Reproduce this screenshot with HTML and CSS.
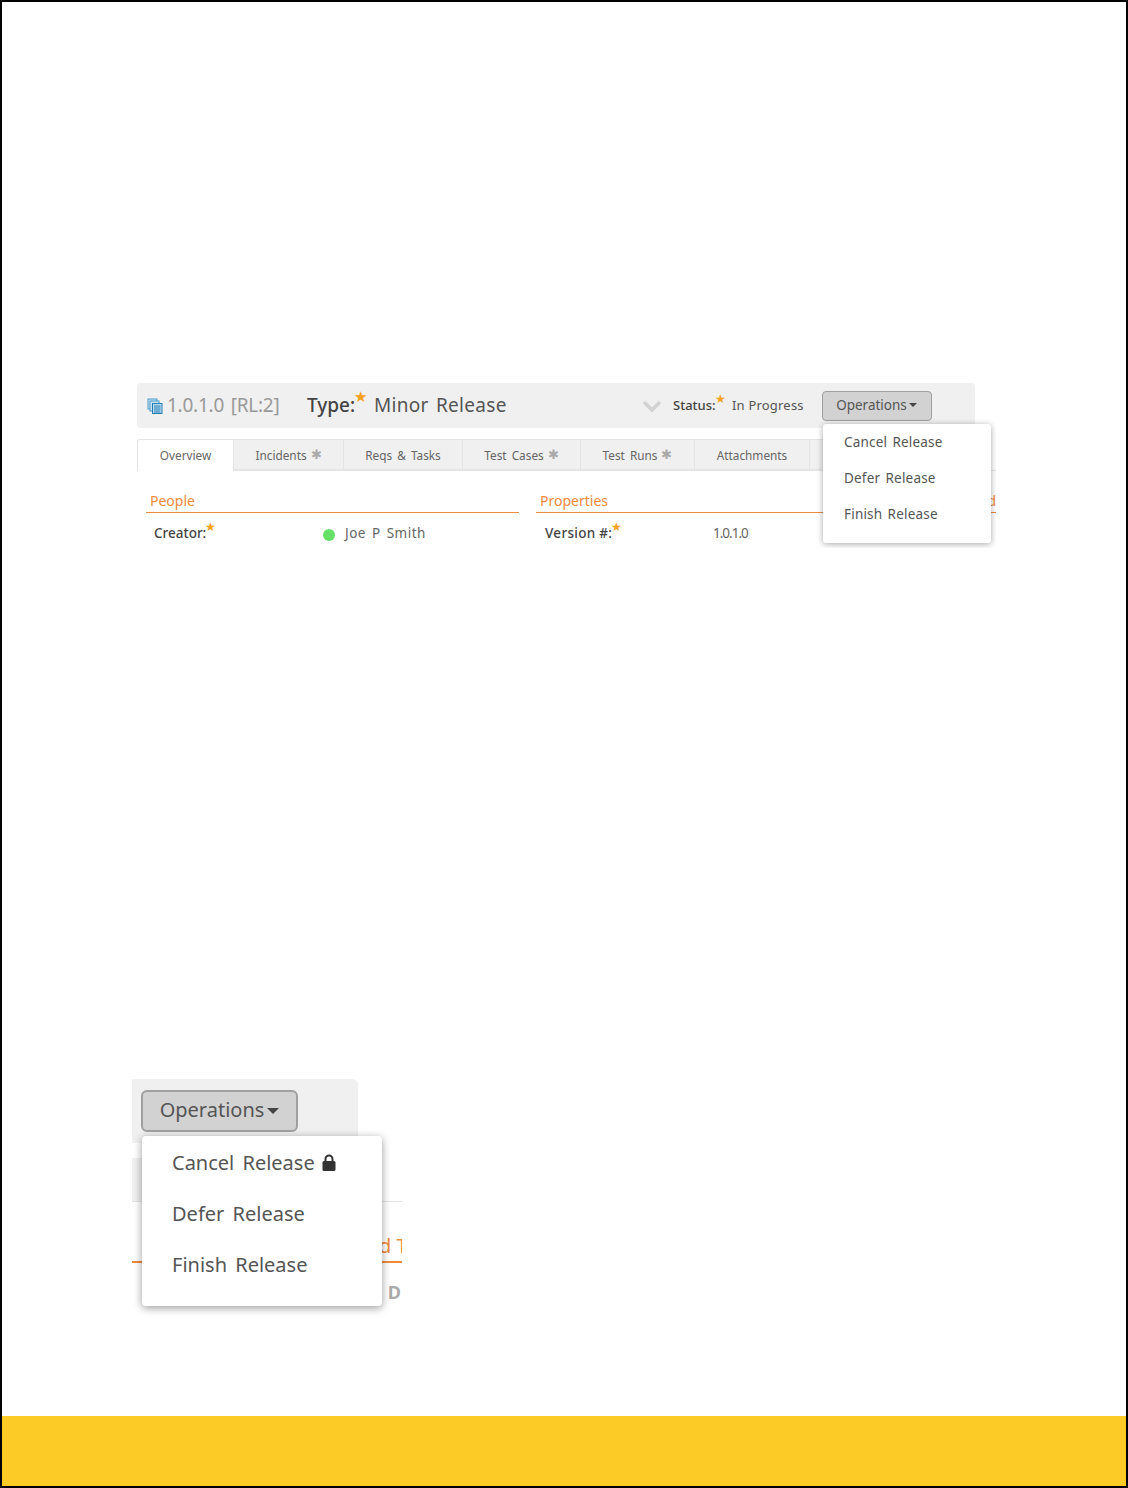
FILE: index.html
```html
<!DOCTYPE html>
<html lang="en">
<head>
<meta charset="utf-8">
<title>Release operations</title>
<link rel="stylesheet" href="styles.css">
</head>
<body>
<div class="page">
  <main class="content">
    <section class="shot-a">
      <div class="head">
        <svg class="doc" viewBox="0 0 16 16" width="16" height="16"><rect x="1" y="1" width="9" height="10" fill="#cfe4f2" stroke="#4a9ac8"/><rect x="3" y="3" width="9" height="10" fill="#cfe4f2" stroke="#4a9ac8"/><rect x="5.5" y="5.5" width="9.5" height="10" fill="#bcdcf0" stroke="#1f7fb5"/><path d="M7 8h6.5M7 10h6.5M7 12h6.5M7 14h6.5" stroke="#1f7fb5"/></svg>
        <span class="rel-name">1.0.1.0 [RL:2]</span>
        <span class="type-label">Type:<i class="star big">★</i></span>
        <span class="type-value">Minor Release</span>
        <svg class="chev" viewBox="0 0 20 12" width="20" height="12"><path d="M2 2l8 8 8-8" fill="none" stroke="#d2d2d2" stroke-width="3.6"/></svg>
        <span class="status-label">Status:<i class="star">★</i></span>
        <span class="status-value">In Progress</span>
        <button class="ops"><span class="ops-t">Operations</span><b class="caret"></b></button>
      </div>
      <nav class="tabs">
        <span class="tab active t1">Overview</span>
        <span class="tab t2">Incidents <i class="gear">✱</i></span>
        <span class="tab t3">Reqs &amp; Tasks</span>
        <span class="tab t4">Test Cases <i class="gear">✱</i></span>
        <span class="tab t5">Test Runs <i class="gear">✱</i></span>
        <span class="tab t6">Attachments</span>
        <span class="tab t7"></span>
      </nav>
      <div class="cols">
        <div class="col people">
          <h3>People</h3>
          <div class="row"><span class="lbl">Creator:<i class="star">★</i></span><span class="dot"></span><span class="val">Joe P Smith</span></div>
        </div>
        <div class="col props">
          <h3>Properties</h3>
          <div class="row"><span class="lbl">Version #:<i class="star">★</i></span><span class="val num">1.0.1.0</span></div>
        </div>
        <div class="col rest"><h3><span class="cut">d</span></h3></div>
      </div>
      <ul class="menu">
        <li>Cancel Release</li>
        <li>Defer Release</li>
        <li>Finish Release</li>
      </ul>
    </section>

    <section class="shot-b">
      <div class="b-head"><button class="ops2"><span class="ops2-t">Operations</span><b class="caret2"></b></button></div>
      <div class="b-tabs"></div>
      <div class="b-title"><span class="b-cut">d T</span></div>
      <div class="b-d">D</div>
      <ul class="menu2">
        <li>Cancel Release <svg class="lock" viewBox="0 0 14 17" width="14" height="17"><path d="M3.5 8V5a3.5 3.5 0 0 1 7 0v3" fill="none" stroke="#333" stroke-width="2"/><rect x="0.5" y="7" width="13" height="10" rx="1.5" fill="#333"/></svg></li>
        <li>Defer Release</li>
        <li>Finish Release</li>
      </ul>
    </section>
  </main>
  <footer class="band"></footer>
</div>
</body>
</html>
```
FILE: styles.css
```css
* { box-sizing: border-box; }
html, body { margin: 0; padding: 0; background: #fff; }
body { font-family: "Noto Sans", "Open Sans", sans-serif; color: #555; }
i { font-style: normal; }
ul { list-style: none; margin: 0; padding: 0; }
button { font-family: inherit; margin: 0; }

.page { width: 1128px; height: 1488px; border: 2px solid #000; display: flex; flex-direction: column; overflow: hidden; }
.content { flex: 1; padding: 381px 0 0 130px; display: flex; flex-direction: column; }
.band { height: 70px; background: #fdcb26; flex: none; }

.shot-a { position: relative; width: 864px; height: 165px; overflow: hidden; padding-left: 5px; }
.head { width: 838px; height: 45px; background: #f0f0f0; border-radius: 4px; display: flex; align-items: center; padding: 0 0 2px 10px; }
.doc { flex: none; margin: 2px 4px 0 0; }
.rel-name { font-size: 19px; color: #999; width: 140px; letter-spacing: -0.25px; word-spacing: 2px; flex: none; }
.type-label { font-size: 19px; color: #444; font-weight: 500; width: 67px; flex: none; position: relative; }
.type-value { font-size: 19px; color: #555; width: 269px; flex: none; word-spacing: 2px; letter-spacing: 0.3px; }
.chev { flex: none; margin: 3px 11px 0 -1px; }
.status-label { font-size: 13px; font-weight: 500; color: #444; width: 59px; flex: none; position: relative; }
.status-value { font-size: 13px; width: 90px; flex: none; letter-spacing: 0.2px; }
.star { color: #f5a020; position: absolute; top: -3px; font-size: 12px; line-height: 1; margin-left: -1px; }
.star.big { font-size: 15px; top: -3px; margin-left: -1px; }

.ops { width: 110px; height: 30px; margin-top: 2px; background: #d2d2d2; border: 1px solid #a0a0a0; border-radius: 4px; font-size: 13.5px; color: #555; padding: 0 0 1px; display: flex; align-items: center; justify-content: center; flex: none; }
.ops-t { margin-left: -1px; }
.caret { width: 0; height: 0; border: 4px solid transparent; border-top-color: #444; border-bottom: 0; margin-left: 2px; }

.tabs { margin-top: 11px; height: 32px; display: flex; border-bottom: 1px solid #e4e4e4; font-size: 11.8px; width: 860px; }
.tab { display: flex; align-items: center; justify-content: center; background: #f0f0f0; border: 1px solid #e4e4e4; border-left: 0; color: #666; gap: 4px; word-spacing: 2px; flex: none; }
.tab.active { background: #fff; border: 1px solid #e4e4e4; border-bottom: 0; border-radius: 3px 0 0 0; height: 32px; padding-bottom: 1px; }
.gear { color: #aaa; font-size: 13px; line-height: 1; }
.t1 { width: 97px; } .t2 { width: 110px; } .t3 { width: 119px; } .t4 { width: 118px; } .t5 { width: 114px; } .t6 { width: 115px; } .t7 { width: 14px; }

.cols { display: flex; margin-top: 20px; padding-left: 9px; }
.col h3 { margin: 0; height: 22px; border-bottom: 1px solid #f08a3c; color: #f08a3c; font-weight: 400; font-size: 14px; line-height: 19px; padding-left: 4px; }
.people { width: 373px; margin-right: 17px; }
.props { width: 290px; }
.rest { width: 170px; }
.cut { display: block; text-align: right; }
.row { display: flex; align-items: center; padding: 10px 0 0 8px; font-size: 13.5px; height: 30px; }
.lbl { color: #444; font-weight: 500; position: relative; flex: none; width: 169px; }
.props .row { padding-left: 9px; }
.props .lbl { letter-spacing: 0.3px; width: 168px; }
.dot { width: 12px; height: 12px; border-radius: 50%; background: #66e066; margin-right: 10px; margin-top: 3px; flex: none; }
.val { color: #666; word-spacing: 2px; letter-spacing: 0.5px; }
.val.num { letter-spacing: -1px; }

.menu { position: absolute; left: 691px; top: 41px; width: 168px; height: 119px; background: #fff; border-radius: 3px; box-shadow: 0 1px 6px rgba(0,0,0,.35); padding: 0 0 0 21px; font-size: 13.5px; letter-spacing: 0.2px; color: #555; word-spacing: 1.5px; }
.menu li { height: 36px; line-height: 36px; }

.shot-b { position: relative; width: 270px; height: 239px; margin-top: 531px; overflow: hidden; }
.b-head { width: 226px; height: 64px; background: #f0f0f0; border-radius: 0 6px 0 0; padding: 11px 0 0 9px; }
.ops2 { width: 157px; height: 42px; background: #d2d2d2; border: 2px solid #a0a0a0; border-radius: 6px; font-size: 20px; color: #555; padding: 0; display: flex; align-items: center; justify-content: center; }
.ops2-t { position: relative; top: -2px; }
.caret2 { width: 0; height: 0; border: 6px solid transparent; border-top-color: #444; border-bottom: 0; margin-left: 3px; }
.b-tabs { margin-top: 15px; height: 44px; border-bottom: 1px solid #e4e4e4; }
.b-tabs::before { content: ""; display: block; width: 12px; height: 43px; background: #f0f0f0; }
.b-title { height: 61px; border-bottom: 2px solid #f08a3c; color: #f08a3c; font-size: 20px; line-height: 28px; padding: 30px 0 0 247px; white-space: nowrap; overflow: hidden; }
.b-d { text-align: right; font-weight: 700; color: #aaa; font-size: 18px; line-height: 24px; margin: 17px 1px 0 0; }
.menu2 { position: absolute; left: 10px; top: 57px; width: 240px; height: 170px; background: #fff; border-radius: 4px; box-shadow: 0 2px 9px rgba(0,0,0,.4); padding: 1px 0 0 30px; font-size: 20px; color: #555; word-spacing: 3px; }
.menu2 li { height: 51px; line-height: 51px; display: flex; align-items: center; gap: 7px; }
.lock { flex: none; }
```
